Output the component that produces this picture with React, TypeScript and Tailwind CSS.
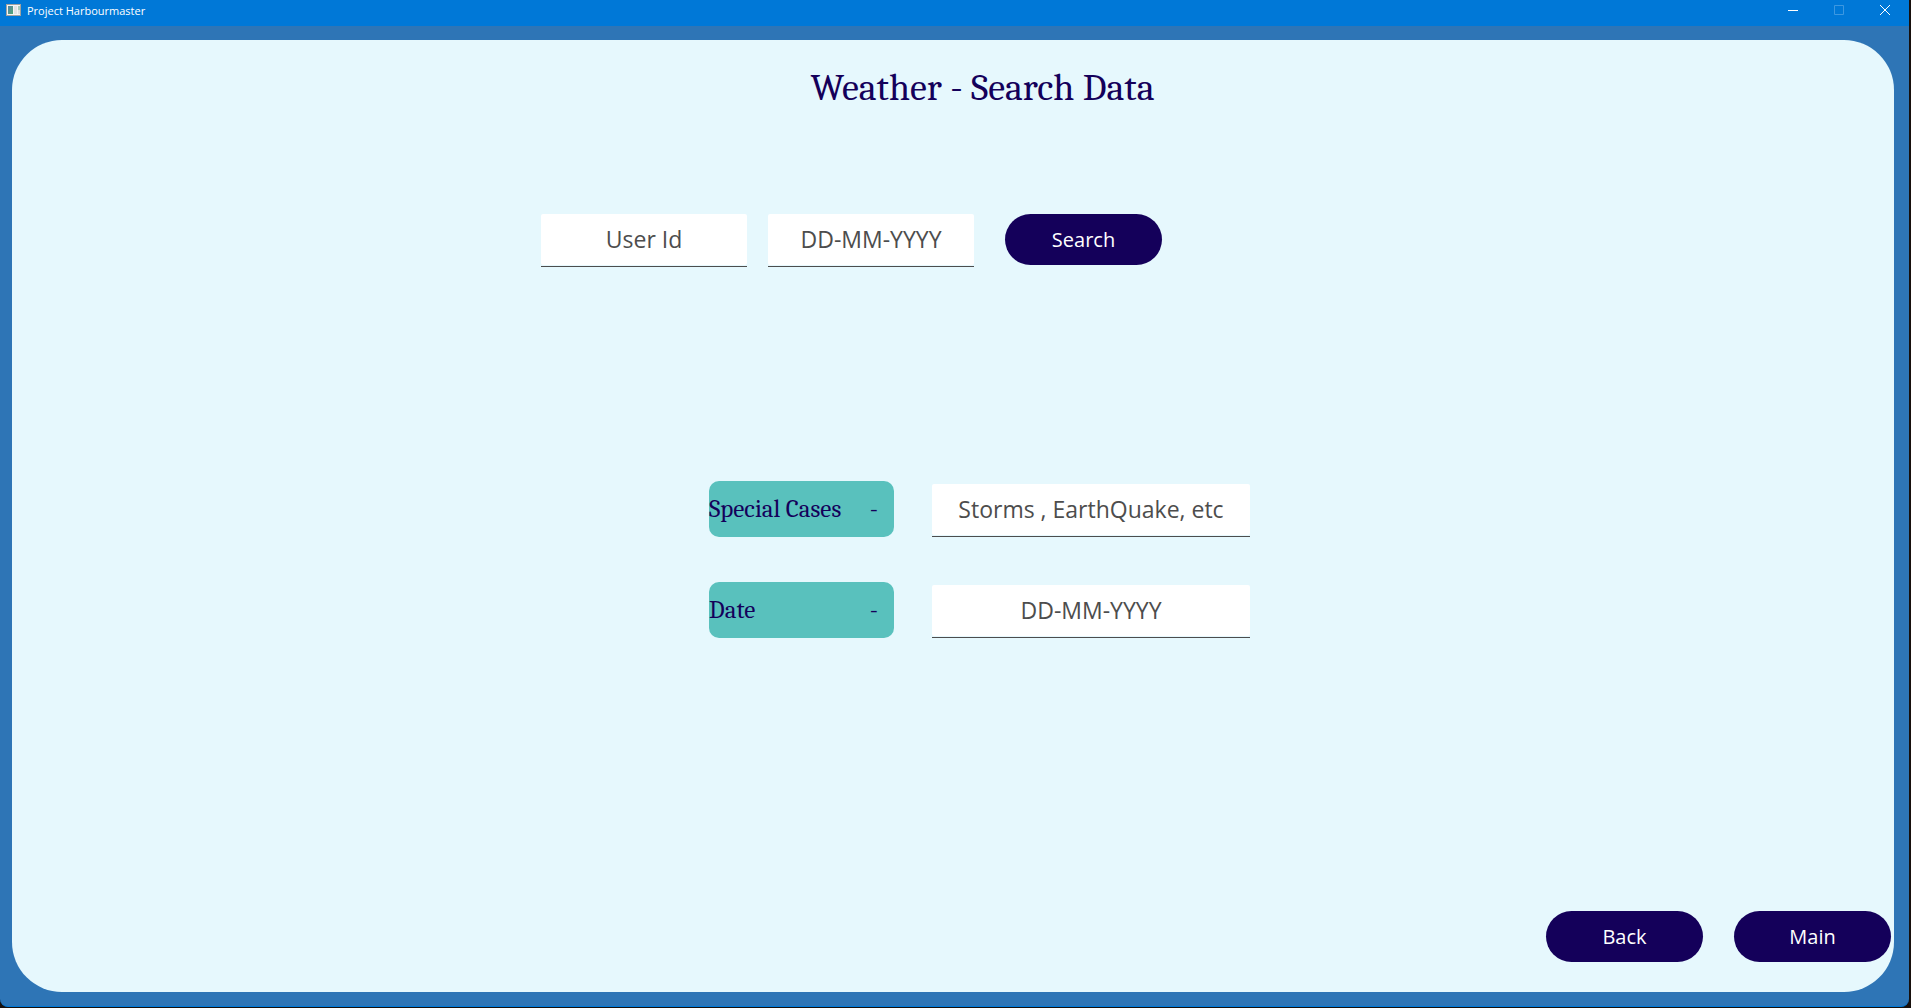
import React from "react";

type FieldProps = { id: string; placeholder: string; label?: string; width: string };

function Field({ id, placeholder, label, width }: FieldProps) {
  return (
    <div className={`border-b border-[#4d4d4d] pb-px ${width}`}>
      <input
        id={id}
        type="text"
        aria-label={label}
        placeholder={placeholder}
        className="block h-[51px] w-full rounded-xs bg-white pb-0.5 text-center text-[23px] text-[#4d4d4d] outline-none placeholder:text-[#4d4d4d] placeholder:opacity-100"
      />
    </div>
  );
}

function PillButton({ children }: { children: React.ReactNode }) {
  return (
    <button
      type="button"
      className="flex h-[51px] w-[157px] items-center justify-center rounded-full bg-[#14005a] text-xl text-white"
    >
      {children}
    </button>
  );
}

function FormRow({ id, label, placeholder }: { id: string; label: string; placeholder: string }) {
  return (
    <div className="flex items-end gap-[38px]">
      <label
        htmlFor={id}
        className="flex h-14 w-[185px] items-center justify-between rounded-[10px] bg-[#59c1bd] pr-4 font-['Cambria','Caladea','Liberation_Serif',serif] text-[25px] text-[#14005a]"
      >
        <span>{label}</span>
        <span>-</span>
      </label>
      <Field id={id} placeholder={placeholder} width="w-[318px]" />
    </div>
  );
}

function TitleBar() {
  return (
    <header className="flex h-[26px] items-start justify-between bg-[#0078d7] text-white">
      <div className="flex h-5 items-center gap-1.5 pl-1.5">
        <svg width="15" height="12" viewBox="0 0 15 12" aria-hidden="true">
          <defs>
            <linearGradient id="appIcon" x1="0" y1="0" x2="1" y2="1">
              <stop offset="0" stopColor="#5585a8" />
              <stop offset="1" stopColor="#4fa575" />
            </linearGradient>
          </defs>
          <rect width="15" height="12" fill="#a3a39f" />
          <rect x="1" y="1" width="13" height="10" fill="#f4f4f4" />
          <rect x="2" y="2" width="5" height="8" fill="url(#appIcon)" />
          <rect x="8" y="2" width="3" height="8" fill="#e2e4e5" />
          <rect x="12" y="2" width="2" height="4" fill="#a9cbbb" />
          <rect x="12" y="6" width="2" height="4" fill="#dcdfe0" />
        </svg>
        <h1 className="pt-0.5 text-[11px] leading-4">Project Harbourmaster</h1>
      </div>
      <div className="flex h-5 pr-px">
        <button type="button" aria-label="Minimize" className="flex w-[46px] items-center justify-center">
          <svg width="10" height="10" viewBox="0 0 10 10" aria-hidden="true">
            <path d="M0 5.5H10" stroke="white" />
          </svg>
        </button>
        <button type="button" aria-label="Maximize" disabled className="flex w-[46px] items-center justify-center">
          <svg width="10" height="10" viewBox="0 0 10 10" aria-hidden="true">
            <path d="M.5 .5H9.5V9.5H.5Z" fill="none" stroke="#3d98e1" />
          </svg>
        </button>
        <button type="button" aria-label="Close" className="flex w-[46px] items-center justify-center">
          <svg width="10" height="10" viewBox="0 0 10 10" aria-hidden="true">
            <path d="M0 0L10 10M10 0L0 10" stroke="white" />
          </svg>
        </button>
      </div>
    </header>
  );
}

export default function App() {
  return (
    <div className="flex min-h-screen bg-[#17100d] pr-0.5 pb-px font-['Segoe_UI','Open_Sans',sans-serif]">
      <div className="flex flex-1 flex-col overflow-hidden rounded-b-lg border-b border-[#0078d7] bg-[#2e75b6]">
        <TitleBar />
        <main className="mt-3.5 mr-[15px] mb-3.5 ml-3 flex flex-1 flex-col items-center rounded-[50px] bg-[#e6f8fd]">
          <h2 className="mt-7 pl-[59px] font-['Cambria','Caladea','Liberation_Serif',serif] text-[38px] leading-10 text-[#14005a]">
            Weather - Search Data
          </h2>
          <form className="mt-[106px] flex items-start pr-[203px]">
            <div className="flex gap-[21px]">
              <Field id="user-id" label="User Id" placeholder="User Id" width="w-[206px]" />
              <Field id="search-date" label="Search date" placeholder="DD-MM-YYYY" width="w-[206px]" />
            </div>
            <div className="ml-[31px]">
              <PillButton>Search</PillButton>
            </div>
          </form>
          <section className="mt-[214px] flex flex-col gap-[45px] pl-[53px]">
            <FormRow id="special-cases" label="Special Cases" placeholder="Storms , EarthQuake, etc" />
            <FormRow id="date" label="Date" placeholder="DD-MM-YYYY" />
          </section>
          <nav className="mt-auto flex gap-[31px] self-end pr-[3px] pb-[30px]">
            <PillButton>Back</PillButton>
            <PillButton>Main</PillButton>
          </nav>
        </main>
      </div>
    </div>
  );
}
